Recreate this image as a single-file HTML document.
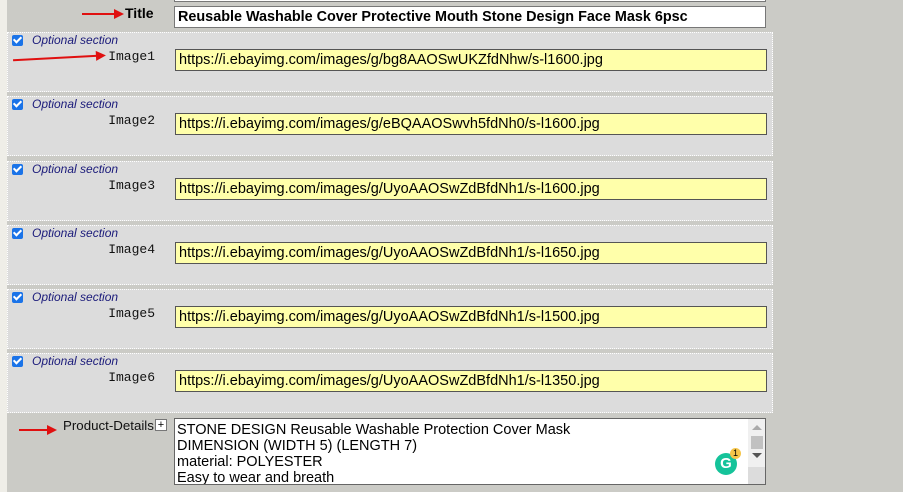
<!DOCTYPE html>
<html><head><style>
body{margin:0;width:903px;height:492px;background:#cbcbc6;position:relative;overflow:hidden;font-family:"Liberation Sans",sans-serif}
.strip{position:absolute;left:0;top:0;width:7px;height:492px;background:#efeee8}
.sec{position:absolute;left:7px;width:766px;height:60px;background:#dcdcdc;border:1px dotted #fff;box-sizing:border-box}
.cb{position:absolute;left:4px;top:2px;width:11px;height:11px;background:#1a73e8;border-radius:2px}
.cb:after{content:"";position:absolute;left:3px;top:0px;width:3px;height:6px;border:solid #fff;border-width:0 2px 2px 0;transform:rotate(45deg)}
.opt{position:absolute;left:24px;top:0px;font-size:12px;font-style:italic;color:#1a1a7a}
.lbl{position:absolute;right:617px;top:16px;font-family:"Liberation Mono",monospace;font-size:13px;color:#111}
.in{position:absolute;left:167px;top:16px;width:592px;height:22px;box-sizing:border-box;background:#ffffaa;border:1px solid #555;font-size:14.5px;padding:2px 3px;color:#000;line-height:16px}
.arrow{position:absolute;height:2px;background:#e01010}
.arrow:after{content:"";position:absolute;right:-8px;top:-4px;border-left:10px solid #e01010;border-top:5px solid transparent;border-bottom:5px solid transparent}
</style></head><body>
<div class="strip"></div>
<div style="position:absolute;left:174px;top:-20px;width:592px;height:22px;border:1px solid #777;background:#fff;box-sizing:border-box"></div>
<div class="arrow" style="left:82px;top:13px;width:34px"></div>
<div style="position:absolute;left:125px;top:5px;font-weight:bold;font-size:14px">Title</div>
<div style="position:absolute;left:174px;top:6px;width:592px;height:22px;box-sizing:border-box;border:1px solid #777;background:#fff;font-weight:bold;font-size:14.4px;padding:2px 3px;line-height:16px">Reusable Washable Cover Protective Mouth Stone Design Face Mask 6psc</div>

<div class="sec" style="top:32px"><div class="cb"></div><div class="opt">Optional section</div><div class="lbl">Image1</div><div class="in">https://i.ebayimg.com/images/g/bg8AAOSwUKZfdNhw/s-l1600.jpg</div></div>
<div class="arrow" style="left:13px;top:57px;width:85px;transform:rotate(-3deg)"></div>
<div class="sec" style="top:96px"><div class="cb"></div><div class="opt">Optional section</div><div class="lbl">Image2</div><div class="in">https://i.ebayimg.com/images/g/eBQAAOSwvh5fdNh0/s-l1600.jpg</div></div>
<div class="sec" style="top:161px"><div class="cb"></div><div class="opt">Optional section</div><div class="lbl">Image3</div><div class="in">https://i.ebayimg.com/images/g/UyoAAOSwZdBfdNh1/s-l1600.jpg</div></div>
<div class="sec" style="top:225px"><div class="cb"></div><div class="opt">Optional section</div><div class="lbl">Image4</div><div class="in">https://i.ebayimg.com/images/g/UyoAAOSwZdBfdNh1/s-l1650.jpg</div></div>
<div class="sec" style="top:289px"><div class="cb"></div><div class="opt">Optional section</div><div class="lbl">Image5</div><div class="in">https://i.ebayimg.com/images/g/UyoAAOSwZdBfdNh1/s-l1500.jpg</div></div>
<div class="sec" style="top:353px"><div class="cb"></div><div class="opt">Optional section</div><div class="lbl">Image6</div><div class="in">https://i.ebayimg.com/images/g/UyoAAOSwZdBfdNh1/s-l1350.jpg</div></div>

<div class="arrow" style="left:19px;top:429px;width:30px"></div>
<div style="position:absolute;left:63px;top:418px;font-size:13.3px;color:#111">Product-Details</div>
<div style="position:absolute;left:155px;top:419px;width:12px;height:12px;border:1px solid #777;background:#fff;box-sizing:border-box;font-size:11px;line-height:10px;text-align:center">+</div>
<div style="position:absolute;left:174px;top:418px;width:592px;height:67px;box-sizing:border-box;border:1px solid #666;background:#fff;font-size:14.5px;line-height:16px;padding:3px 2px;overflow:hidden">STONE DESIGN Reusable Washable Protection Cover Mask<br>DIMENSION (WIDTH 5) (LENGTH 7)<br>material: POLYESTER<br>Easy to wear and breath
<div style="position:absolute;right:0;top:0;width:17px;height:65px;background:#f0f0f0"><div style="position:absolute;left:3px;top:17px;width:12px;height:13px;background:#c1c1c1"></div><div style="position:absolute;left:4px;top:34px;border-top:5px solid #555;border-left:5px solid transparent;border-right:5px solid transparent"></div><div style="position:absolute;left:4px;top:6px;border-bottom:5px solid #aaa;border-left:5px solid transparent;border-right:5px solid transparent"></div><div style="position:absolute;left:0;top:48px;width:17px;height:17px;background:#dcdcdc"></div></div>
<div style="position:absolute;left:540px;top:34px;width:22px;height:22px;border-radius:50%;background:#15c39a;color:#fff;font-weight:bold;font-size:15px;text-align:center;line-height:22px">G</div>
<div style="position:absolute;left:555px;top:29px;width:11px;height:11px;border-radius:50%;background:#f5c54a;font-size:9px;text-align:center;line-height:11px">1</div>
</div>
</body></html>
